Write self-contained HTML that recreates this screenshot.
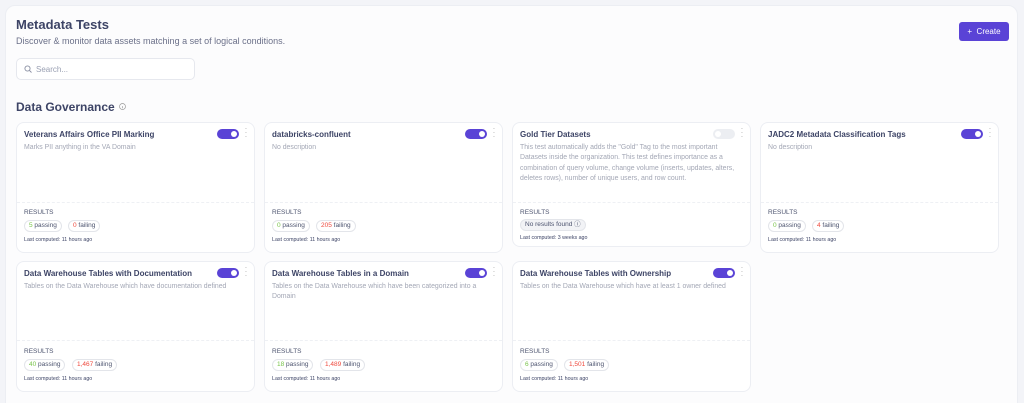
<!DOCTYPE html>
<html><head><meta charset="utf-8"><style>
*{box-sizing:border-box;margin:0;padding:0}
html,body{width:1024px;height:403px;overflow:hidden}
body{background:#f3f4f8;font-family:"Liberation Sans",sans-serif;position:relative;color:#374066}
.panel{position:absolute;left:5px;top:5px;width:1013px;height:410px;background:#fcfcfd;border-radius:10px;border:1px solid #eceef3}
.abs{position:absolute}
h1{position:absolute;left:16px;top:17px;font-size:13px;font-weight:bold;color:#3d4466}
.sub{left:16px;top:36px;font-size:9px;color:#6b7089}
.btn{left:959px;top:22px;width:50px;height:19px;background:#5a43d6;border-radius:3px;color:#fff;font-size:8px;line-height:19px;text-align:center}
.search{left:16px;top:58px;width:179px;height:22px;border:1px solid #e6e8ee;border-radius:5px;background:#fff;font-size:8px;color:#9aa0b3;padding:6px 0 0 19px}
.h2{left:16px;top:100px;font-size:12px;font-weight:bold;color:#3d4466}
.card{position:absolute;width:239px;background:#fff;border:1px solid #eceef3;border-radius:8px}
.t{position:absolute;left:7px;top:7px;font-size:8px;font-weight:bold;color:#3d4466}
.d{position:absolute;left:7px;top:20px;width:205px;font-size:6.9px;line-height:10.3px;color:#a3a7b5}
.tog{position:absolute;left:200px;top:6px;width:22px;height:10px;border-radius:5px;background:#5a43d6}
.tog:after{content:"";position:absolute;right:2px;top:2px;width:6px;height:6px;border-radius:50%;background:#fff}
.tog.off{background:#eceef2}.tog.off:after{left:2px;right:auto}
.dots{position:absolute;left:227px;top:4px;font-size:8px;color:#aaa;line-height:4px;width:4px;text-align:center}
.div{position:absolute;left:0;right:0;border-top:1px dashed #eef0f4}
.r{position:absolute;left:7px;font-size:6.5px;color:#4d546f}
.pill{position:absolute;height:12px;border:1px solid #e3e5ea;border-radius:6px;font-size:6.5px;line-height:10px;padding:0 4px;color:#4d546f;background:#fff}
.g{color:#79c44a}.red{color:#ef4a3e}
.lc{position:absolute;left:7px;font-size:5.3px;color:#3d4466}
</style></head><body>
<div class="panel"></div>
<h1>Metadata Tests</h1>
<div class="abs sub">Discover &amp; monitor data assets matching a set of logical conditions.</div>
<div class="abs btn">+&nbsp;&nbsp;Create</div>
<div class="abs search">Search...</div>
<svg class="abs" style="left:24px;top:65px" width="8" height="8" viewBox="0 0 8 8"><circle cx="3.5" cy="3.5" r="2.6" fill="none" stroke="#8a90a3" stroke-width=".9"/><path d="M5.5 5.5L7.5 7.5" stroke="#8a90a3" stroke-width=".9"/></svg>
<div class="abs h2">Data Governance</div>
<svg class="abs" style="left:119px;top:103px" width="7" height="7" viewBox="0 0 8 8"><circle cx="4" cy="4" r="3.4" fill="none" stroke="#999" stroke-width=".8"/><path d="M4 3.5v2.5" stroke="#999" stroke-width=".8"/></svg>

<div class="card" style="left:16px;top:122px;height:131px">
<div class="t">Veterans Affairs Office PII Marking</div><div class="tog"></div><div class="dots">·<br>·<br>·</div>
<div class="d">Marks PII anything in the VA Domain</div>
<div class="div" style="top:79px"></div>
<div class="r" style="top:86px">RESULTS</div>
<div class="pill" style="left:7px;top:97px"><span class="g">5</span> passing</div>
<div class="pill" style="left:51px;top:97px"><span class="red">0</span> failing</div>
<div class="lc" style="top:114px">Last computed: 11 hours ago</div></div>

<div class="card" style="left:264px;top:122px;height:131px">
<div class="t">databricks-confluent</div><div class="tog"></div><div class="dots">·<br>·<br>·</div>
<div class="d">No description</div>
<div class="div" style="top:79px"></div>
<div class="r" style="top:86px">RESULTS</div>
<div class="pill" style="left:7px;top:97px"><span class="g">0</span> passing</div>
<div class="pill" style="left:51px;top:97px"><span class="red">205</span> failing</div>
<div class="lc" style="top:114px">Last computed: 11 hours ago</div></div>

<div class="card" style="left:512px;top:122px;height:125px">
<div class="t">Gold Tier Datasets</div><div class="tog off"></div><div class="dots">·<br>·<br>·</div>
<div class="d" style="width:215px">This test automatically adds the "Gold" Tag to the most important Datasets inside the organization. This test defines importance as a combination of query volume, change volume (inserts, updates, alters, deletes rows), number of unique users, and row count.</div>
<div class="div" style="top:79px"></div>
<div class="r" style="top:86px">RESULTS</div>
<div class="pill" style="left:7px;top:96px;background:#f2f3f6">No results found ⓘ</div>
<div class="lc" style="top:112px">Last computed: 3 weeks ago</div></div>

<div class="card" style="left:760px;top:122px;height:131px">
<div class="t">JADC2 Metadata Classification Tags</div><div class="tog"></div><div class="dots">·<br>·<br>·</div>
<div class="d">No description</div>
<div class="div" style="top:79px"></div>
<div class="r" style="top:86px">RESULTS</div>
<div class="pill" style="left:7px;top:97px"><span class="g">0</span> passing</div>
<div class="pill" style="left:51px;top:97px"><span class="red">4</span> failing</div>
<div class="lc" style="top:114px">Last computed: 11 hours ago</div></div>

<div class="card" style="left:16px;top:261px;height:131px">
<div class="t">Data Warehouse Tables with Documentation</div><div class="tog"></div><div class="dots">·<br>·<br>·</div>
<div class="d" style="width:225px">Tables on the Data Warehouse which have documentation defined</div>
<div class="div" style="top:78px"></div>
<div class="r" style="top:86px">RESULTS</div>
<div class="pill" style="left:7px;top:97px"><span class="g">40</span> passing</div>
<div class="pill" style="left:55px;top:97px"><span class="red">1,467</span> failing</div>
<div class="lc" style="top:114px">Last computed: 11 hours ago</div></div>

<div class="card" style="left:264px;top:261px;height:131px">
<div class="t">Data Warehouse Tables in a Domain</div><div class="tog"></div><div class="dots">·<br>·<br>·</div>
<div class="d">Tables on the Data Warehouse which have been categorized into a Domain</div>
<div class="div" style="top:78px"></div>
<div class="r" style="top:86px">RESULTS</div>
<div class="pill" style="left:7px;top:97px"><span class="g">18</span> passing</div>
<div class="pill" style="left:55px;top:97px"><span class="red">1,489</span> failing</div>
<div class="lc" style="top:114px">Last computed: 11 hours ago</div></div>

<div class="card" style="left:512px;top:261px;height:131px">
<div class="t">Data Warehouse Tables with Ownership</div><div class="tog"></div><div class="dots">·<br>·<br>·</div>
<div class="d" style="width:225px">Tables on the Data Warehouse which have at least 1 owner defined</div>
<div class="div" style="top:78px"></div>
<div class="r" style="top:86px">RESULTS</div>
<div class="pill" style="left:7px;top:97px"><span class="g">6</span> passing</div>
<div class="pill" style="left:51px;top:97px"><span class="red">1,501</span> failing</div>
<div class="lc" style="top:114px">Last computed: 11 hours ago</div></div>
</body></html>
